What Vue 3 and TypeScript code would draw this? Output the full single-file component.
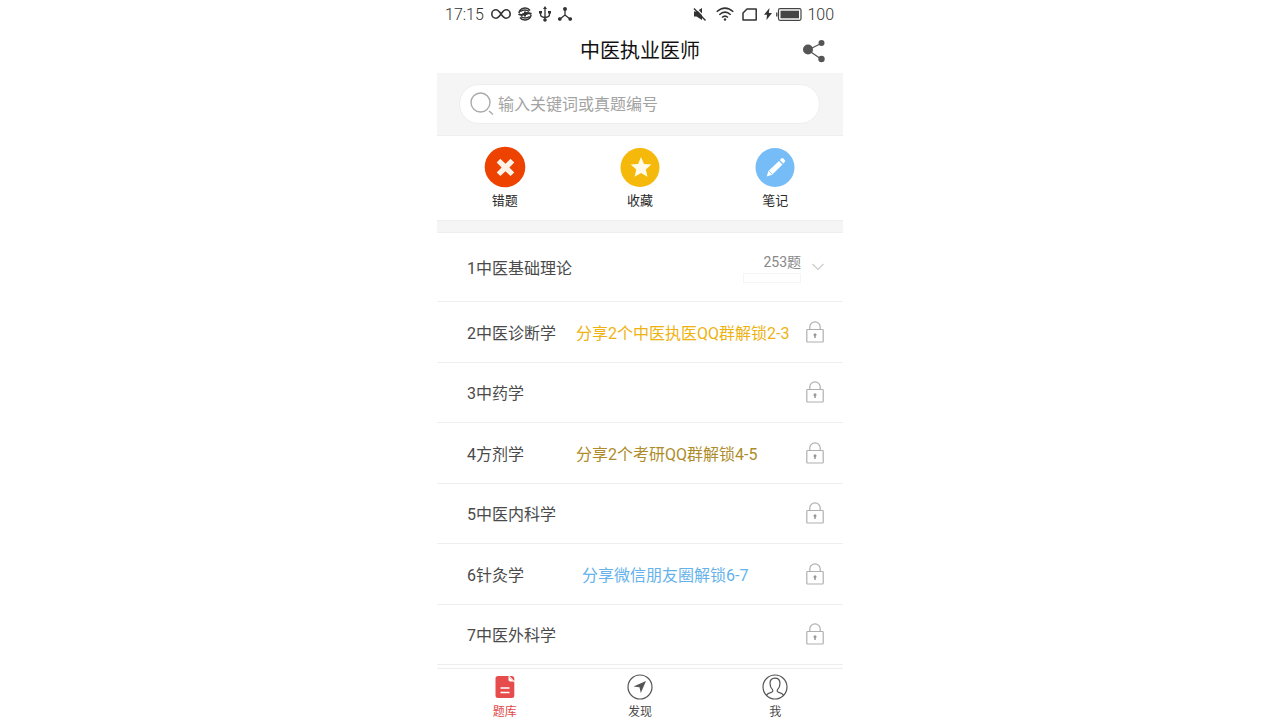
<script setup lang="ts">
import { ref } from 'vue'

interface Chapter {
  name: string
  hint?: string
  tone?: string
}

const keyword = ref('')
const activeTab = ref('bank')

const chapters: Chapter[] = [
  { name: '2中医诊断学', hint: '分享2个中医执医QQ群解锁2-3', tone: 'amber' },
  { name: '3中药学' },
  { name: '4方剂学', hint: '分享2个考研QQ群解锁4-5', tone: 'bronze' },
  { name: '5中医内科学' },
  { name: '6针灸学', hint: '分享微信朋友圈解锁6-7', tone: 'blue' },
  { name: '7中医外科学' },
]
</script>

<template>
  <div class="app">
    <div class="status">
      <div class="group left">
        <span class="digits">17:15</span>
        <svg width="20" height="12" viewBox="0 0 20 12" fill="none" stroke="#333" stroke-width="1.6">
          <path d="M10 6C8 3.300 7 1.800 5 1.800a4.200 4.200 0 0 0 0 8.400C7 10.200 8 8.700 10 6S13 1.800 15 1.800a4.200 4.200 0 0 1 0 8.400C13 10.200 12 8.700 10 6Z" />
        </svg>
        <svg width="14" height="14" viewBox="0 0 14 14" fill="none" stroke="#333" stroke-width="1.500">
          <path d="M1 6A6 5.500 0 0 1 12 3.500M13 8A6 5.500 0 0 1 2 10.500M2.500 4.500Q7 1.500 11 4.500M3 9.500Q7 12.500 11.500 9.500" />
          <path d="M.5 7Q3.500 9 6 7T13.500 7M7 4.500v5M4.500 7h5" stroke-width="2" />
        </svg>
        <svg width="12" height="16" viewBox="0 0 12 16" fill="none" stroke="#333" stroke-width="1.300">
          <path d="M6 2v12M1.500 6v2.500Q1.500 11 6 11.500Q10.500 11 10.500 8.500V6" />
          <path d="M6 0 8 3H4ZM0 5h3v2.500H0ZM9 5h3v2.500H9Z" fill="#333" stroke="none" />
          <circle cx="6" cy="14" r="1.800" fill="#333" stroke="none" />
        </svg>
        <svg width="14" height="14" viewBox="0 0 14 14" fill="#333" stroke="#333" stroke-width="1.300">
          <path d="M7 2v6L2 12M7 8l5 4" fill="none" />
          <circle cx="7" cy="2" r="1.300" /><circle cx="1.800" cy="12" r="1.200" /><circle cx="12.200" cy="12" r="1.200" />
        </svg>
      </div>
      <div class="group right">
        <svg width="14" height="14" viewBox="0 0 14 14" fill="#333">
          <path d="M1 4.500h2.500L9 1v12L3.500 9.500H1Z" />
          <path d="M2.500 .5 14 12.500" stroke="#fff" stroke-width="1.200" />
          <path d="M1 1.500 12.500 13.500" stroke="#333" stroke-width="1.400" />
        </svg>
        <svg class="wifi" width="18" height="14" viewBox="0 0 18 14" fill="none" stroke="#333" stroke-width="1.500">
          <path d="M.7 4.700Q9-2.500 17.300 4.700M3.300 7.700Q9 2.500 14.700 7.700M6 10.500Q9 7.800 12 10.500" />
          <circle cx="9" cy="12.500" r="1.200" fill="#333" stroke="none" />
        </svg>
        <svg class="sim" width="16" height="13" viewBox="0 0 16 13" fill="none" stroke="#333" stroke-width="1.500">
          <path d="M5 1h9.200v11H1V5Z" stroke-linejoin="round" />
        </svg>
        <svg class="bolt" width="8" height="12" viewBox="0 0 8 12" fill="#333"><path d="M5.500 0 0 6.800h3L2.500 12 8 5H4.800Z" /></svg>
        <svg width="26" height="13" viewBox="0 0 26 13" fill="none" stroke="#444">
          <rect x="2.500" y=".7" width="22.500" height="11.600" rx="1.500" stroke-width="1.200" />
          <path d="M4.500 2.700H23v7.600H4.500Z" fill="#444" stroke="none" />
          <path d="M.8 4.500v4" stroke-width="1.400" />
        </svg>
        <span class="digits">100</span>
      </div>
    </div>

    <header class="header">
      <h1>中医执业医师</h1>
      <button class="share" type="button" aria-label="分享">
        <svg width="24" height="24" viewBox="0 0 24 24" fill="#555">
          <path d="M6 11 19 4.500M6 11l13 9" stroke="#555" stroke-width="1.300" />
          <circle cx="6" cy="10.500" r="5" /><circle cx="19.500" cy="4" r="3" /><circle cx="19.500" cy="20" r="3.200" />
        </svg>
      </button>
    </header>

    <form class="search" @submit.prevent>
      <label class="box">
        <svg width="24" height="24" viewBox="0 0 24 24" fill="none" stroke="#aaa" stroke-width="1.400">
          <circle cx="10.500" cy="10.500" r="9.500" /><path d="m19 19 4 3.500" />
        </svg>
        <input v-model="keyword" type="text" placeholder="输入关键词或真题编号" aria-label="搜索" />
      </label>
    </form>

    <div class="actions">
      <button type="button">
        <svg width="42" height="42" viewBox="0 0 42 42">
          <circle cx="21" cy="21" r="20.300" fill="#ed4200" />
          <path d="m16.300 12.800 5.200 4.900 5-4.900 3.800 3.700-4.900 5 4.900 4.900-3.800 3.700-5-4.800-5.100 4.800-3.700-3.700 4.900-5-4.900-4.800Z" fill="#fff2e6" />
        </svg>
        <span>错题</span>
      </button>
      <button type="button">
        <svg width="42" height="42" viewBox="0 0 42 42">
          <circle cx="21" cy="21.500" r="19.500" fill="#f5b90c" />
          <path d="m22 11 3 6.900 7.400.7-5.600 4.900 1.700 7.300-6.500-3.900-6.400 3.900 1.700-7.300-5.600-4.900 7.400-.7Z" fill="#fffbe8" />
        </svg>
        <span>收藏</span>
      </button>
      <button type="button">
        <svg width="42" height="42" viewBox="0 0 42 42">
          <circle cx="21" cy="21.500" r="19.500" fill="#76bdf8" />
          <path d="m25 14.900 3.500 3.700-10.300 10.100-5.500 1.800 1.700-5.500ZM25.900 14l1.700-1.700q.8-.7 1.500 0l1.800 1.900q.8.800 0 1.500l-1.600 1.700Z" fill="#fff" />
          <path d="m14.800 24.800 3.600 3.600" stroke="#76bdf8" stroke-width=".8" />
        </svg>
        <span>笔记</span>
      </button>
    </div>

    <div class="band"></div>

    <ul class="chapters">
      <li class="first">
        <button class="row" type="button">
          <span class="name">1中医基础理论</span>
          <span class="tally"><span>253题</span><span class="progress"></span></span>
          <svg class="chevron" width="12" height="8" viewBox="0 0 12 8" fill="none" stroke="#ccc" stroke-width="1.200"><path d="m.5 1 5.500 5.500L11.500 1" /></svg>
        </button>
      </li>
      <li v-for="chapter in chapters" :key="chapter.name">
        <button class="row" type="button">
          <span class="name">{{ chapter.name }}</span>
          <span v-if="chapter.hint" class="hint" :class="chapter.tone">{{ chapter.hint }}</span>
          <svg class="lock" width="18" height="22" viewBox="0 0 18 22" fill="none" stroke="#b0b0b0" stroke-width="1.200">
            <rect x=".8" y="8.500" width="16.400" height="12.500" rx=".8" />
            <path d="M3.800 8.500V6a5.200 5.200 0 0 1 10.400 0v2.500" />
            <circle cx="9" cy="13.700" r="1.500" fill="#999" stroke="none" /><path d="M9 14v3" stroke="#999" stroke-width="1.500" />
          </svg>
        </button>
      </li>
    </ul>

    <nav class="tabs">
      <button type="button" :class="{ active: activeTab === 'bank' }" @click="activeTab = 'bank'">
        <svg width="26" height="26" viewBox="0 0 26 26">
          <path d="M6 2h10l6.300 6.500V21.500q0 2.500-2.500 2.500H6q-2.500 0-2.500-2.500V4.500Q3.500 2 6 2Z" fill="#e74c4c" />
          <path d="M16.500 2.800v3q0 1.800 1.800 1.800h3.200Z" fill="#fff" />
          <path d="M17.500 2H20q2.300 0 2.300 2.500V7Z" fill="#e74c4c" />
          <path d="M8.500 14h9M8.500 18.500h9" stroke="#fff" stroke-width="1.400" />
        </svg>
        <span>题库</span>
      </button>
      <button type="button" :class="{ active: activeTab === 'discover' }" @click="activeTab = 'discover'">
        <svg width="26" height="26" viewBox="0 0 26 26">
          <circle cx="13" cy="13" r="12" fill="none" stroke="#555" stroke-width="1.200" />
          <path d="M19 7 6.500 12.500l6 .8 1.300 5.700Z" fill="#555" />
        </svg>
        <span>发现</span>
      </button>
      <button type="button" :class="{ active: activeTab === 'me' }" @click="activeTab = 'me'">
        <svg width="26" height="26" viewBox="0 0 26 26" fill="none" stroke="#555" stroke-width="1.200">
          <circle cx="13" cy="13" r="12" />
          <path d="M4.500 21q1.300-1.600 4.700-2.600 2.500-.8 1.300-2.700Q8 13 8 9.500 8 4.200 13 4.200T18 9.500q0 3.500-2.500 6.200-1.200 1.900 1.300 2.700 3.400 1 4.700 2.600" />
        </svg>
        <span>我</span>
      </button>
    </nav>
  </div>
</template>

<style>
body {
  margin: 0;
  background: #fff;
}
</style>

<style scoped>
.app {
  box-sizing: border-box;
  display: flex;
  flex-direction: column;
  width: 100%;
  max-width: 406px;
  min-height: 100vh;
  margin: 0 auto;
  color: #4a4a4a;
  font-family: Roboto, "Noto Sans CJK SC", sans-serif;
  font-size: 16px;
  font-weight: 400;
}
button {
  padding: 0;
  border: 0;
  background: none;
  color: inherit;
  font: inherit;
  cursor: pointer;
}
svg {
  display: block;
  flex: none;
}
.status {
  display: flex;
  justify-content: space-between;
  height: 28px;
  padding: 0 9px 0 8px;
}
.digits {
  color: #333;
  font-weight: 300;
}
.group {
  display: flex;
  align-items: center;
}
.left {
  gap: 7px;
}
.wifi {
  margin-left: 9px;
}
.sim {
  margin-left: 8px;
}
.bolt {
  margin: 0 4px 0 6px;
}
.right .digits {
  margin-left: 5px;
}
.header {
  position: relative;
  display: flex;
  align-items: center;
  justify-content: center;
  height: 45px;
}
h1 {
  margin: 0;
  color: #111;
  font-size: 20px;
  line-height: 28px;
  font-weight: 400;
}
.share {
  position: absolute;
  top: 11px;
  right: 17px;
}
.search {
  padding: 11px 23px 11px 22px;
  border-bottom: 1px solid #eee;
  background: #f5f5f5;
}
.box {
  display: flex;
  align-items: center;
  gap: 4px;
  height: 38px;
  padding: 0 10px;
  border: 1px solid #eee;
  border-radius: 20px;
  background: #fff;
}
.box input {
  flex: 1;
  min-width: 0;
  padding: 0;
  border: 0;
  outline: 0;
  background: none;
  color: #444;
  font: inherit;
}
.box input::placeholder {
  color: #a3a3a3;
  opacity: 1;
}
.actions {
  display: flex;
  padding: 10px 0 8px;
}
.actions button {
  display: flex;
  flex: 1;
  flex-direction: column;
  align-items: center;
  gap: 2px;
  color: #2a2a2a;
  font-size: 13px;
  line-height: 22px;
}
.band {
  height: 11px;
  border: 1px solid #eee;
  border-width: 1px 0;
  background: #f5f5f5;
}
.chapters {
  display: flex;
  flex: 1;
  flex-direction: column;
  margin: 0 0 3px;
  padding: 0;
  list-style: none;
}
.chapters li {
  display: flex;
  flex: 1;
  min-height: 48px;
  border-bottom: 1px solid #eee;
}
.chapters .first {
  flex: none;
  height: 68px;
}
.row {
  display: flex;
  flex: 1;
  align-items: center;
  padding: 0 19px 0 30px;
  text-align: left;
}
.name {
  min-width: 109px;
}
.tally {
  display: flex;
  flex-direction: column;
  align-items: flex-end;
  gap: 1px;
  margin-left: auto;
  color: #888;
  font-size: 14px;
  line-height: 20px;
}
.progress {
  width: 56px;
  height: 8px;
  border: 1px solid #f5f5f5;
}
.chevron {
  margin-left: 11px;
}
.lock {
  margin-left: auto;
}
.amber {
  color: #eeb211;
}
.bronze {
  color: #ae8c2b;
}
.blue {
  padding-left: 6px;
  color: #65b3ea;
}
.tabs {
  display: flex;
  height: 51px;
  border-top: 1px solid #eee;
}
.tabs button {
  display: flex;
  flex: 1;
  flex-direction: column;
  align-items: center;
  padding-top: 5px;
  gap: 2px;
  font-size: 12px;
  line-height: 20px;
}
.tabs .active {
  color: #e04848;
}
</style>
